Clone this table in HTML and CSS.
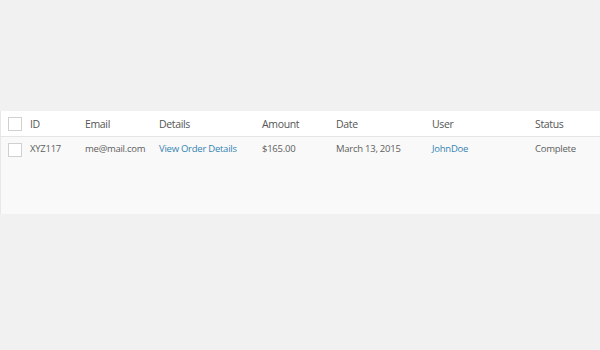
FILE: index.html
```html
<!DOCTYPE html>
<html>
<head>
<meta charset="utf-8">
<link rel="stylesheet" href="styles.css">
</head>
<body>
<div class="wrap">
  <table class="orders">
    <thead>
      <tr>
        <th class="cb"><span class="box"></span></th>
        <th class="c-id">ID</th>
        <th class="c-email">Email</th>
        <th class="c-details">Details</th>
        <th class="c-amount">Amount</th>
        <th class="c-date">Date</th>
        <th class="c-user">User</th>
        <th class="c-status">Status</th>
      </tr>
    </thead>
    <tbody>
      <tr>
        <td class="cb"><span class="box"></span></td>
        <td>XYZ117</td>
        <td>me@mail.com</td>
        <td><a href="#">View Order Details</a></td>
        <td>$165.00</td>
        <td>March 13, 2015</td>
        <td><a href="#">JohnDoe</a></td>
        <td>Complete</td>
      </tr>
    </tbody>
  </table>
</div>
</body>
</html>
```
FILE: styles.css
```css
html, body {
  margin: 0;
  padding: 0;
  background: #f1f1f1;
  width: 600px;
  height: 350px;
  overflow: hidden;
}
.wrap {
  padding-top: 111px;
}
.orders {
  width: 600px;
  border-collapse: collapse;
  table-layout: fixed;
  font-family: "Open Sans", sans-serif;
  border-left: 1px solid #e8e8e8;
}
.orders th {
  background: #fff;
  font-weight: normal;
  font-size: 10.5px;
  letter-spacing: -0.35px;
  color: #555;
  text-align: left;
  height: 24px;
  padding: 1px 0 0 0;
  border-bottom: 1px solid #e5e5e5;
  vertical-align: middle;
}
.orders td {
  background: #f9f9f9;
  font-size: 9.5px;
  letter-spacing: -0.25px;
  color: #606060;
  padding: 5px 0 0 0;
  height: 71px;
  vertical-align: top;
}
.orders td.cb { padding-top: 6px; }
.orders a {
  color: #3584b3;
  text-decoration: none;
}
.cb { width: 29px; }
.c-id { width: 55px; }
.c-email { width: 74px; }
.c-details { width: 103px; }
.c-amount { width: 74px; }
.c-date { width: 96px; }
.c-user { width: 103px; }
.box {
  display: block;
  width: 12px;
  height: 12px;
  margin-left: 7px;
  border: 1px solid #d0d0d0;
  background: #fff;
  box-sizing: content-box;
}
```
